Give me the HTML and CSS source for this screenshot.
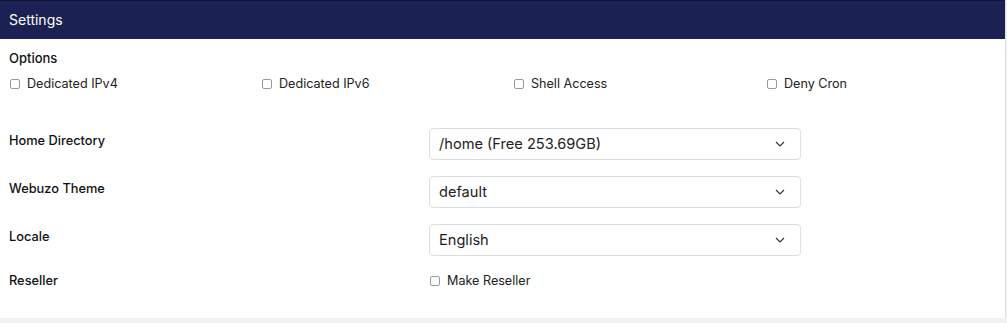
FILE: index.html
```html
<!DOCTYPE html>
<html>
<head>
<meta charset="utf-8">
<link rel="stylesheet" href="styles.css">
</head>
<body>
<div class="card">
  <div class="card-header">Settings</div>
  <div class="card-body">
    <div class="section-title">Options</div>
    <div class="options">
      <label class="check"><span class="box"></span>Dedicated IPv4</label>
      <label class="check"><span class="box"></span>Dedicated IPv6</label>
      <label class="check"><span class="box"></span>Shell Access</label>
      <label class="check"><span class="box"></span>Deny Cron</label>
    </div>
    <div class="form">
      <div class="row">
        <div class="label">Home Directory</div>
        <div class="select"><span>/home (Free 253.69GB)</span><svg class="chev" width="10" height="6" viewBox="0 0 10 6"><path d="M1 1 L5 5 L9 1" fill="none" stroke="#333" stroke-width="1.2"/></svg></div>
      </div>
      <div class="row">
        <div class="label">Webuzo Theme</div>
        <div class="select"><span>default</span><svg class="chev" width="10" height="6" viewBox="0 0 10 6"><path d="M1 1 L5 5 L9 1" fill="none" stroke="#333" stroke-width="1.2"/></svg></div>
      </div>
      <div class="row">
        <div class="label">Locale</div>
        <div class="select"><span>English</span><svg class="chev" width="10" height="6" viewBox="0 0 10 6"><path d="M1 1 L5 5 L9 1" fill="none" stroke="#333" stroke-width="1.2"/></svg></div>
      </div>
      <div class="row row-check">
        <div class="label">Reseller</div>
        <label class="check"><span class="box"></span>Make Reseller</label>
      </div>
    </div>
  </div>
</div>
</body>
</html>
```

FILE: styles.css
```css
html, body {
  margin: 0;
  padding: 0;
}
body {
  background: #f1f1f1;
  font-family: Inter, "Noto Sans", sans-serif;
  color: #1e1e1e;
  width: 1007px;
  height: 323px;
}
.card {
  width: 1005px;
  height: 318px;
  background: #ffffff;
  border-right: 1px solid #e2e2e2;
}
.card-header {
  height: 38px;
  background: #1b2152;
  border-top: 1px solid #111638;
  color: #ffffff;
  font-size: 14px;
  line-height: 38px;
  padding-left: 9px;
}
.card-body {
  padding: 10px 9px 0 9px;
}
.section-title {
  font-size: 13px;
  font-weight: 500;
  line-height: 18px;
  color: #111;
}
.options {
  display: grid;
  grid-template-columns: 252px 252px 253px 1fr;
  margin-top: 8px;
}
.check {
  display: flex;
  align-items: center;
  font-size: 12.6px;
  line-height: 18px;
  color: #222;
}
.box {
  width: 8px;
  height: 8px;
  border: 1px solid #9a9a9a;
  border-radius: 2px;
  margin-left: 1px;
  margin-right: 7px;
}
.form {
  margin-top: 35px;
  display: flex;
  flex-direction: column;
  gap: 16px;
}
.row {
  display: grid;
  grid-template-columns: 420px 372px;
}
.label {
  font-size: 12.8px;
  font-weight: 500;
  line-height: 18px;
  padding-top: 4px;
  color: #111;
}
.row-check .label {
  padding-top: 0;
}
.select {
  height: 30px;
  border: 1px solid #dcdfe4;
  border-radius: 4px;
  display: flex;
  align-items: center;
  justify-content: space-between;
  padding: 0 15px 0 9px;
  font-size: 14.6px;
  color: #222;
}
.chev {
  display: block;
}
```
